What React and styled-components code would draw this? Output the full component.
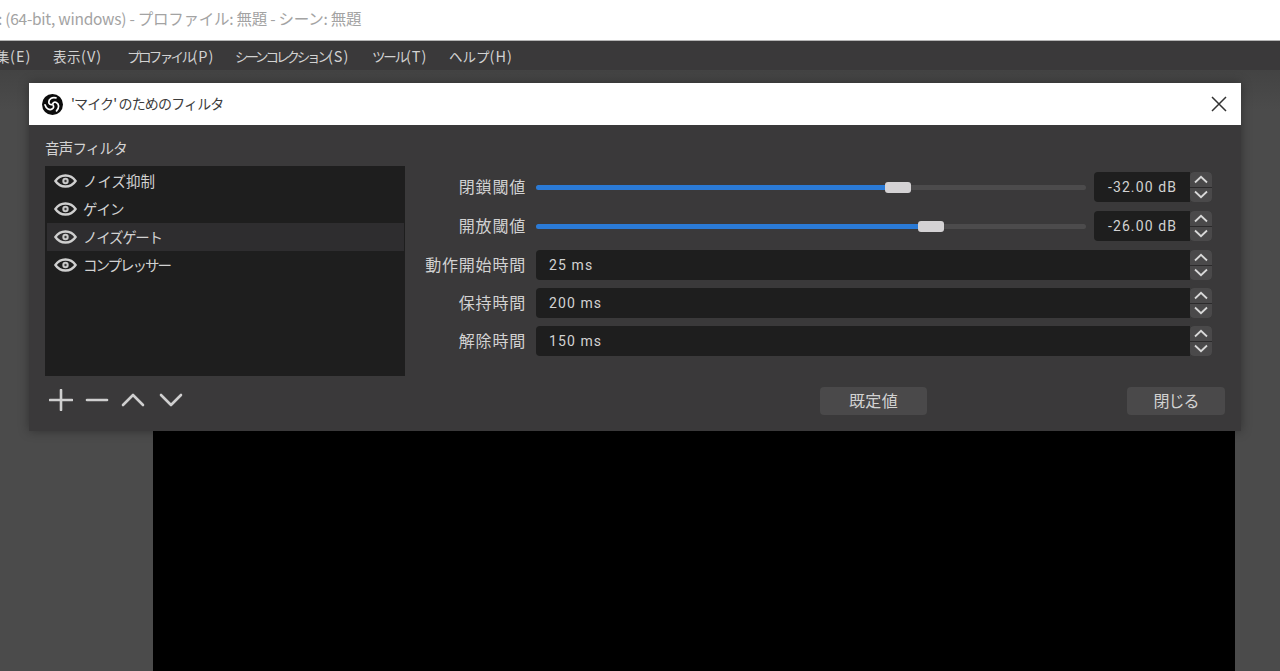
import React from 'react'
import styled, { createGlobalStyle } from 'styled-components'

const GlobalStyle = createGlobalStyle`
  html, body {
    margin: 0;
    padding: 0;
    background: #4b4b4b;
    overflow: hidden;
  }
  * {
    box-sizing: border-box;
  }
`

const FONT = `"Noto Sans CJK JP", "Noto Sans", sans-serif`

const Page = styled.div`
  position: relative;
  width: 1280px;
  height: 671px;
  display: flex;
  flex-direction: column;
  overflow: hidden;
  font-family: ${FONT};
  background: #4b4b4b;
`

const TitleBar = styled.div`
  height: 41px;
  flex: none;
  display: flex;
  align-items: center;
  padding-bottom: 4px;
  margin-left: -2px;
  background: #fff;
  border-bottom: 1px solid #b5b5b5;
  color: #a3a3a3;
  font-size: 15.5px;
  white-space: nowrap;
  letter-spacing: -0.26px;
`

const MenuBar = styled.div`
  height: 29px;
  flex: none;
  display: flex;
  align-items: center;
  margin-left: -18px;
  background: #3a393a;
  color: #d2d2d2;
  font-size: 13.5px;
  white-space: nowrap;
`

const MenuItem = styled.span`
  flex: none;
  width: ${(p) => p.$w}px;
  letter-spacing: ${(p) => p.$tight}px;
`

const MenuKey = styled.span`
  font-size: 14.5px;
  letter-spacing: 1px;
`

const Workspace = styled.div`
  flex: 1;
  display: flex;
  justify-content: flex-end;
  padding-right: 45px;
  padding-top: 40px;
  background: linear-gradient(#434343 0, #4b4b4b 40px);
`

const Preview = styled.div`
  width: 1082px;
  background: #000;
`

const Dialog = styled.div`
  position: absolute;
  left: 29px;
  top: 83px;
  width: 1212px;
  height: 348px;
  display: flex;
  flex-direction: column;
  background: #3a393a;
  box-shadow: 0 0 10px rgba(0, 0, 0, 0.35);
  color: #d2d2d2;
`

const DialogHeader = styled.div`
  height: 42px;
  flex: none;
  display: flex;
  align-items: center;
  padding: 0 13px;
  gap: 8px;
  background: #fff;
  color: #3c3c3c;
  font-size: 14px;
  letter-spacing: -0.85px;
`

const HeaderTitle = styled.span`
  flex: 1;
  margin-top: -2px;
  white-space: nowrap;
`

const CloseIcon = styled.svg`
  width: 16px;
  height: 16px;
  margin-right: 1px;
`

const DialogBody = styled.div`
  flex: 1;
  display: flex;
  padding: 13px 16px 16px;
`

const LeftColumn = styled.div`
  width: 360px;
  flex: none;
  display: flex;
  flex-direction: column;
`

const SectionLabel = styled.div`
  height: 28px;
  flex: none;
  font-size: 14.5px;
  line-height: 20px;
  letter-spacing: -0.8px;
`

const FilterList = styled.div`
  height: 210px;
  flex: none;
  display: flex;
  flex-direction: column;
  padding: 1px 1px 0 2px;
  background: #1e1e1e;
`

const FilterRow = styled.div`
  height: 28px;
  flex: none;
  display: flex;
  align-items: center;
  padding-left: 7px;
  gap: 6px;
  background: ${(p) => (p.$selected ? '#2e2d2f' : 'transparent')};
`

const FilterName = styled.span`
  margin-top: -2px;
  font-size: 14.5px;
  letter-spacing: ${(p) => p.$tight}px;
  white-space: nowrap;
`

const EyeIcon = styled.svg`
  width: 23px;
  height: 14px;
  flex: none;
`

const ListToolbar = styled.div`
  display: flex;
  align-items: center;
  gap: 12px;
  padding: 13px 0 0 4px;
`

const ToolIcon = styled.svg`
  width: 24px;
  height: 22px;
  margin-left: ${(p) => p.$ml || 0}px;
  fill: none;
  stroke: #cfcfcf;
  stroke-width: 2.6;
  stroke-linecap: round;
  stroke-linejoin: round;
`

const RightColumn = styled.div`
  flex: 1;
  display: flex;
  flex-direction: column;
  padding-left: 5px;
  padding-top: 34px;
`

const PropRow = styled.div`
  height: 30px;
  flex: none;
  display: flex;
  align-items: center;
  margin-right: 13px;
  margin-bottom: ${(p) => p.$gap}px;
`

const PropLabel = styled.label`
  width: 116px;
  flex: none;
  margin-right: 10px;
  margin-top: -2px;
  text-align: right;
  font-size: 16px;
  letter-spacing: 0.8px;
  white-space: nowrap;
`

const SliderTrack = styled.div`
  position: relative;
  width: 550px;
  height: 5px;
  flex: none;
  margin-right: 8px;
  border-radius: 3px;
  background: #4c4b4c;
`

const SliderFill = styled.div`
  height: 100%;
  border-radius: 3px;
  background: #2a7ad6;
`

const SliderThumb = styled.div`
  position: absolute;
  top: -3px;
  width: 26px;
  height: 11px;
  margin-left: -13px;
  border-radius: 3px;
  background: #d4d2d4;
`

const Field = styled.div`
  flex: 1;
  height: 30px;
  display: flex;
  align-items: center;
  justify-content: ${(p) => (p.$right ? 'flex-end' : 'flex-start')};
  padding: ${(p) => (p.$right ? '0 13px 1px 0' : '0 0 1px 13px')};
  border-radius: 4px 0 0 4px;
  background: #1e1e1e;
  font-family: Roboto, sans-serif;
  font-size: 14px;
  letter-spacing: 1.1px;
  white-space: pre;
`

const Spinner = styled.div`
  width: 22px;
  height: 30px;
  flex: none;
  display: flex;
  flex-direction: column;
  gap: 1px;
  border-radius: 4px;
  overflow: hidden;
  background: #2b2a2b;
`

const SpinButton = styled.div`
  flex: 1;
  display: flex;
  align-items: center;
  justify-content: center;
  background: #4a494a;
`

const SpinIcon = styled.svg`
  width: 14px;
  height: 9px;
  fill: none;
  stroke: #d8d8d8;
  stroke-width: 1.8;
`

const Footer = styled.div`
  display: flex;
  margin-top: 31px;
  padding-left: 410px;
`

const FooterButton = styled.button`
  height: 28px;
  width: ${(p) => p.$w}px;
  margin-left: ${(p) => p.$ml || 0}px;
  border: none;
  border-radius: 4px;
  background: #4a494a;
  color: #d2d2d2;
  font-family: ${FONT};
  font-size: 16px;
  letter-spacing: ${(p) => p.$tight}px;
  padding: 0 0 2px;
`

const LogoSvg = styled.svg`
  width: 21px;
  height: 21px;
  flex: none;
`

const MENU = [
  { label: '編集', key: '(E)', w: 71, tight: 0.5 },
  { label: '表示', key: '(V)', w: 74, tight: 0.5 },
  { label: 'プロファイル', key: '(P)', w: 108, tight: -2.6 },
  { label: 'シーンコレクション', key: '(S)', w: 137, tight: -3.1 },
  { label: 'ツール', key: '(T)', w: 77, tight: -2.2 },
  { label: 'ヘルプ', key: '(H)', w: 70, tight: 0 },
]

const FILTERS = [
  { name: 'ノイズ抑制', tight: 0 },
  { name: 'ゲイン', tight: -0.8 },
  { name: 'ノイズゲート', tight: -1.3 },
  { name: 'コンプレッサー', tight: -2 },
]

const PROPS = [
  { label: '閉鎖閾値', slider: 0.658, value: '-32.00 dB', gap: 9 },
  { label: '開放閾値', slider: 0.718, value: '-26.00 dB', gap: 9 },
  { label: '動作開始時間', value: '25 ms', gap: 8 },
  { label: '保持時間', value: '200 ms', gap: 8 },
  { label: '解除時間', value: '150 ms', gap: 0 },
]

const ARM = 'M16 4.4C11.5 3.2 7.6 5.6 7.8 9.4c.1 1.9 1.6 3 3.4 2.8'

const Logo = () => (
  <LogoSvg viewBox="0 0 24 24">
    <circle cx="12" cy="12" r="12" fill="#0c0c0c" />
    <g fill="none" stroke="#fff" strokeWidth="2" strokeLinecap="round">
      <path d={ARM} />
      <path d={ARM} transform="rotate(120 12 12)" />
      <path d={ARM} transform="rotate(240 12 12)" />
    </g>
  </LogoSvg>
)

const Eye = () => (
  <EyeIcon viewBox="0 0 23 14">
    <path
      d="M1.4 7C3.900 3.200 7.400 1.500 11.500 1.500S19.100 3.200 21.600 7c-2.500 3.800-6 5.500-10.100 5.500S3.900 10.800 1.400 7z"
      fill="none"
      stroke="#cfcfcf"
      strokeWidth="2.3"
    />
    <circle cx="11.500" cy="7" r="3.200" fill="#c8c8c8" />
    <circle cx="11.500" cy="7" r="1.200" fill="#3a3a3a" />
  </EyeIcon>
)

const Spin = () => (
  <Spinner>
    <SpinButton>
      <SpinIcon viewBox="0 0 14 9">
        <path d="M1 7.500 7 1.800l6 5.700" />
      </SpinIcon>
    </SpinButton>
    <SpinButton>
      <SpinIcon viewBox="0 0 14 9">
        <path d="M1 1.500 7 7.200l6-5.700" />
      </SpinIcon>
    </SpinButton>
  </Spinner>
)

const App = () => {
  return (
    <Page>
      <GlobalStyle />
      <TitleBar>: (64-bit, windows) - プロファイル: 無題 - シーン: 無題</TitleBar>
      <MenuBar>
        {MENU.map((m) => (
          <MenuItem key={m.key} $w={m.w} $tight={m.tight}>
            {m.label}
            <MenuKey>{m.key}</MenuKey>
          </MenuItem>
        ))}
      </MenuBar>
      <Workspace>
        <Preview />
      </Workspace>

      <Dialog>
        <DialogHeader>
          <Logo />
          <HeaderTitle>'マイク' のためのフィルタ</HeaderTitle>
          <CloseIcon viewBox="0 0 16 16">
            <path d="M1 1l14 14M15 1 1 15" stroke="#333" strokeWidth="1.5" fill="none" />
          </CloseIcon>
        </DialogHeader>
        <DialogBody>
          <LeftColumn>
            <SectionLabel>音声フィルタ</SectionLabel>
            <FilterList>
              {FILTERS.map((f, i) => (
                <FilterRow key={f.name} $selected={i === 2}>
                  <Eye />
                  <FilterName $tight={f.tight}>{f.name}</FilterName>
                </FilterRow>
              ))}
            </FilterList>
            <ListToolbar>
              <ToolIcon viewBox="0 0 24 22"><path d="M12 1v20M1 11h22" /></ToolIcon>
              <ToolIcon viewBox="0 0 24 22"><path d="M2 11h20" /></ToolIcon>
              <ToolIcon viewBox="0 0 24 22"><path d="M2 16 12 6l10 10" /></ToolIcon>
              <ToolIcon $ml={2} viewBox="0 0 24 22"><path d="M2 6l10 10L22 6" /></ToolIcon>
            </ListToolbar>
          </LeftColumn>
          <RightColumn>
            {PROPS.map((p) => (
              <PropRow key={p.label} $gap={p.gap}>
                <PropLabel>{p.label}</PropLabel>
                {p.slider !== undefined && (
                  <SliderTrack>
                    <SliderFill style={{ width: `${p.slider * 100}%` }} />
                    <SliderThumb style={{ left: `${p.slider * 100}%` }} />
                  </SliderTrack>
                )}
                <Field $right={p.slider !== undefined}>{p.value}</Field>
                <Spin />
              </PropRow>
            ))}
            <Footer>
              <FooterButton $w={107} $tight={0.3}>既定値</FooterButton>
              <FooterButton $w={98} $ml={200} $tight={-1}>閉じる</FooterButton>
            </Footer>
          </RightColumn>
        </DialogBody>
      </Dialog>
    </Page>
  )
}

export default App
